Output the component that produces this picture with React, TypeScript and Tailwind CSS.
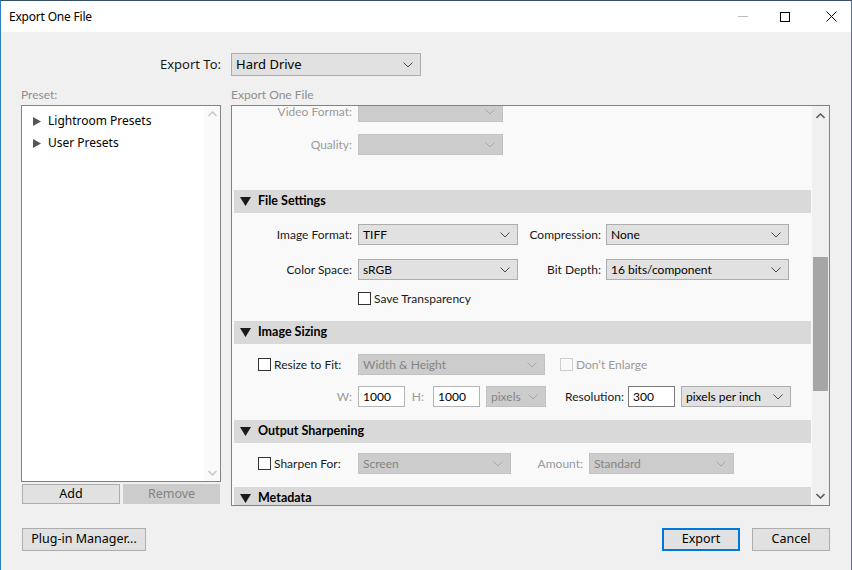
import React from "react";

const font = { fontFamily: '"Noto Sans", "Open Sans", sans-serif' };
const panelFont = { fontFamily: 'Lato, "Noto Sans", sans-serif' };

function Chevron({ color = "#444" }: { color?: string }) {
  return (
    <svg width="10" height="6" viewBox="0 0 10 6" className="shrink-0">
      <polyline points="0.5,0.5 5,5 9.5,0.5" fill="none" stroke={color} strokeWidth="1" />
    </svg>
  );
}

function Select({
  w,
  text,
  disabled = false,
  h = "h-[21px]",
  size = "text-[12px]",
}: {
  w: string;
  text?: string;
  disabled?: boolean;
  h?: string;
  size?: string;
}) {
  return (
    <div
      className={`${w} ${h} ${size} flex items-center justify-between border pl-[4px] pr-[7px] ${
        disabled ? "bg-[#cccccc] border-[#c2c2c2] text-[#848484]" : "bg-[#e1e1e1] border-[#adadad] text-black"
      }`}
    >
      <span className="leading-none whitespace-nowrap">{text}</span>
      <Chevron color={disabled ? "#a8a8a8" : "#4a4a4a"} />
    </div>
  );
}

function Label({ w, children, dim = false }: { w: string; children: React.ReactNode; dim?: boolean }) {
  return (
    <div className={`${w} shrink-0 text-right text-[12px] whitespace-nowrap ${dim ? "text-[#9a9a9a]" : "text-[#1a1a1a]"}`}>
      {children}
    </div>
  );
}

function Check({ dim = false }: { dim?: boolean }) {
  return (
    <div
      className={`w-[13px] h-[13px] shrink-0 border ${dim ? "border-[#cfcfcf] bg-[#f9f9f9]" : "border-[#333] bg-white"}`}
    />
  );
}

function Header({ title }: { title: string }) {
  return (
    <div className="h-[23px] bg-[#d9d9d9] ml-[2px] mr-[1px] flex items-center pl-[6px]">
      <svg width="11" height="9" viewBox="0 0 11 9" className="mr-[7px]">
        <polygon points="0,0 11,0 5.5,9" fill="#1a1a1a" />
      </svg>
      <span className="text-[12.5px] font-bold text-black">{title}</span>
    </div>
  );
}

function Input({ w, text, dark = false }: { w: string; text: string; dark?: boolean }) {
  return (
    <div
      className={`${w} h-[21px] bg-white border ${dark ? "border-[#7a7a7a]" : "border-[#b4b4b4]"} flex items-center pl-[4px] text-[12px] text-black`}
    >
      {text}
    </div>
  );
}

function Button({
  w,
  children,
  primary = false,
  disabled = false,
  h = "h-[22px]",
}: {
  w: string;
  children: React.ReactNode;
  primary?: boolean;
  disabled?: boolean;
  h?: string;
}) {
  return (
    <div
      className={`${w} ${h} flex items-center justify-center text-[12.5px] ${
        primary
          ? "border-2 border-[#0078d7] bg-[#e1e1e1] text-black"
          : disabled
          ? "border border-[#cccccc] bg-[#cccccc] text-[#838383]"
          : "border border-[#adadad] bg-[#e1e1e1] text-black"
      }`}
    >
      {children}
    </div>
  );
}

export default function App() {
  return (
    <div
      className="w-[852px] h-[570px] bg-[#f0f0f0] border-x border-[#2a7fc6] border-t border-t-[#34506a] flex flex-col overflow-hidden"
      style={font}
    >
      {/* Title bar */}
      <div className="h-[31px] bg-white flex items-center shrink-0">
        <span className="ml-[8px] text-[12px] text-black tracking-[-0.2px]">Export One File</span>
        <div className="ml-auto flex items-center h-full">
          <div className="w-[46px] h-full flex items-center justify-center">
            <div className="w-[10px] h-px bg-[#bdbdbd]" />
          </div>
          <div className="w-[46px] h-full flex items-center justify-center ml-[-4px]">
            <div className="w-[10px] h-[10px] border border-black" />
          </div>
          <div className="w-[46px] h-full flex items-center justify-center mr-[-3px]">
            <svg width="11" height="11" viewBox="0 0 11 11">
              <path d="M0.5 0.5 L10.5 10.5 M10.5 0.5 L0.5 10.5" stroke="#000" strokeWidth="1" />
            </svg>
          </div>
        </div>
      </div>

      {/* Body */}
      <div className="flex-1 flex flex-col pl-[20px] pr-[21px]">
        {/* Export To */}
        <div className="flex items-center mt-[21px] h-[23px]">
          <div className="w-[200px] text-right text-[13px] text-[#1a1a1a]">Export To:</div>
          <div className="ml-[10px]">
            <Select w="w-[190px]" h="h-[23px]" size="text-[13px]" text="Hard Drive" />
          </div>
        </div>

        <div className="flex mt-[12px]">
          {/* Left column */}
          <div className="w-[200px] flex flex-col">
            <div className="text-[12px] text-[#8e8e8e] h-[14px] leading-[14px]" style={panelFont}>
              Preset:
            </div>
            <div className="mt-[3px] h-[377px] border border-[#828282] bg-white flex">
              <div className="flex-1 pt-[4px] pl-[11px]">
                {["Lightroom Presets", "User Presets"].map((t) => (
                  <div key={t} className="h-[22px] flex items-center text-[12px] text-black">
                    <svg width="8" height="9" viewBox="0 0 8 9" className="mr-[7px]">
                      <polygon points="0,0 8,4.5 0,9" fill="#555" />
                    </svg>
                    {t}
                  </div>
                ))}
              </div>
              <div className="w-[16px] flex flex-col items-center justify-between py-[5px] bg-[#fafafa]">
                <svg width="9" height="6" viewBox="0 0 9 6">
                  <polyline points="0.5,5 4.5,1 8.5,5" fill="none" stroke="#c8c8c8" strokeWidth="1.5" />
                </svg>
                <svg width="9" height="6" viewBox="0 0 9 6">
                  <polyline points="0.5,1 4.5,5 8.5,1" fill="none" stroke="#c8c8c8" strokeWidth="1.5" />
                </svg>
              </div>
            </div>
            <div className="flex justify-between mt-[2px] pl-[1px] pr-[1px]">
              <Button w="w-[98px]" h="h-[20px]">Add</Button>
              <Button w="w-[97px]" h="h-[20px]" disabled>
                Remove
              </Button>
            </div>
          </div>

          {/* Right panel */}
          <div className="ml-[10px] flex-1 flex flex-col" style={panelFont}>
            <div className="text-[12px] text-[#8e8e8e] h-[14px] leading-[14px]">Export One File</div>
            <div className="mt-[3px] h-[401px] border border-[#828282] bg-[#f9f9f9] flex overflow-hidden">
              <div className="flex-1 overflow-hidden">
                <div className="mt-[-5px] flex flex-col">
                  <div className="flex items-center h-[21px]">
                    <Label w="w-[120px]" dim>
                      Video Format:
                    </Label>
                    <div className="ml-[6px]">
                      <Select w="w-[145px]" disabled />
                    </div>
                  </div>
                  <div className="flex items-center h-[21px] mt-[12px]">
                    <Label w="w-[120px]" dim>
                      Quality:
                    </Label>
                    <div className="ml-[6px]">
                      <Select w="w-[145px]" disabled />
                    </div>
                  </div>

                  <div className="mt-[35px]">
                    <Header title="File Settings" />
                  </div>
                  <div className="flex items-center h-[21px] mt-[11px]">
                    <Label w="w-[120px]">Image Format:</Label>
                    <div className="ml-[6px]">
                      <Select w="w-[160px]" text="TIFF" />
                    </div>
                    <Label w="w-[83px]">Compression:</Label>
                    <div className="ml-[5px]">
                      <Select w="w-[183px]" text="None" />
                    </div>
                  </div>
                  <div className="flex items-center h-[21px] mt-[14px]">
                    <Label w="w-[120px]">Color Space:</Label>
                    <div className="ml-[6px]">
                      <Select w="w-[160px]" text="sRGB" />
                    </div>
                    <Label w="w-[83px]">Bit Depth:</Label>
                    <div className="ml-[5px]">
                      <Select w="w-[183px]" text="16 bits/component" />
                    </div>
                  </div>
                  <div className="flex items-center h-[13px] mt-[12px] pl-[126px]">
                    <Check />
                    <span className="ml-[3px] text-[12px] text-[#1a1a1a]">Save Transparency</span>
                  </div>

                  <div className="mt-[16px]">
                    <Header title="Image Sizing" />
                  </div>
                  <div className="flex items-center h-[21px] mt-[10px]">
                    <div className="w-[126px] flex items-center pl-[26px]">
                      <Check />
                      <span className="ml-[3px] text-[12px] text-[#1a1a1a] whitespace-nowrap">Resize to Fit:</span>
                    </div>
                    <Select w="w-[187px]" text="Width & Height" disabled />
                    <div className="ml-[15px] flex items-center">
                      <Check dim />
                      <span className="ml-[3px] text-[12px] text-[#9a9a9a]">Don’t Enlarge</span>
                    </div>
                  </div>
                  <div className="flex items-center h-[21px] mt-[11px]">
                    <Label w="w-[120px]" dim>
                      W:
                    </Label>
                    <div className="ml-[6px]">
                      <Input w="w-[47px]" text="1000" />
                    </div>
                    <Label w="w-[28px]" dim>
                      <span className="pr-[9px]">H:</span>
                    </Label>
                    <div className="ml-[0px]">
                      <Input w="w-[47px]" text="1000" />
                    </div>
                    <div className="ml-[6px]">
                      <Select w="w-[60px]" text="pixels" disabled />
                    </div>
                    <Label w="w-[78px]">Resolution:</Label>
                    <div className="ml-[4px]">
                      <Input w="w-[47px]" text="300" dark />
                    </div>
                    <div className="ml-[6px]">
                      <Select w="w-[110px]" text="pixels per inch" />
                    </div>
                  </div>

                  <div className="mt-[13px]">
                    <Header title="Output Sharpening" />
                  </div>
                  <div className="flex items-center h-[21px] mt-[10px]">
                    <div className="w-[126px] flex items-center pl-[26px]">
                      <Check />
                      <span className="ml-[3px] text-[12px] text-[#1a1a1a] whitespace-nowrap">Sharpen For:</span>
                    </div>
                    <Select w="w-[153px]" text="Screen" disabled />
                    <Label w="w-[72px]" dim>
                      Amount:
                    </Label>
                    <div className="ml-[6px]">
                      <Select w="w-[145px]" text="Standard" disabled />
                    </div>
                  </div>

                  <div className="mt-[13px]">
                    <Header title="Metadata" />
                  </div>
                </div>
              </div>
              {/* Scrollbar */}
              <div className="w-[17px] bg-[#f0f0f0] flex flex-col items-center">
                <div className="h-[17px] flex items-center justify-center mt-[1px]">
                  <svg width="9" height="6" viewBox="0 0 9 6">
                    <polyline points="0.5,5 4.5,1 8.5,5" fill="none" stroke="#606060" strokeWidth="1.6" />
                  </svg>
                </div>
                <div className="mt-[133px] w-[15px] h-[134px] bg-[#a6a6a6]" />
                <div className="mt-auto h-[17px] flex items-center justify-center mb-[1px]">
                  <svg width="9" height="6" viewBox="0 0 9 6">
                    <polyline points="0.5,1 4.5,5 8.5,1" fill="none" stroke="#606060" strokeWidth="1.6" />
                  </svg>
                </div>
              </div>
            </div>
          </div>
        </div>

        {/* Bottom buttons */}
        <div className="flex items-center mt-[22px] pl-[1px]">
          <Button w="w-[124px]" h="h-[23px]">
            Plug-in Manager...
          </Button>
          <div className="ml-auto flex items-center">
            <Button w="w-[78px]" h="h-[23px]" primary>
              Export
            </Button>
            <div className="ml-[12px]">
              <Button w="w-[78px]" h="h-[23px]">
                Cancel
              </Button>
            </div>
          </div>
        </div>
      </div>
    </div>
  );
}
